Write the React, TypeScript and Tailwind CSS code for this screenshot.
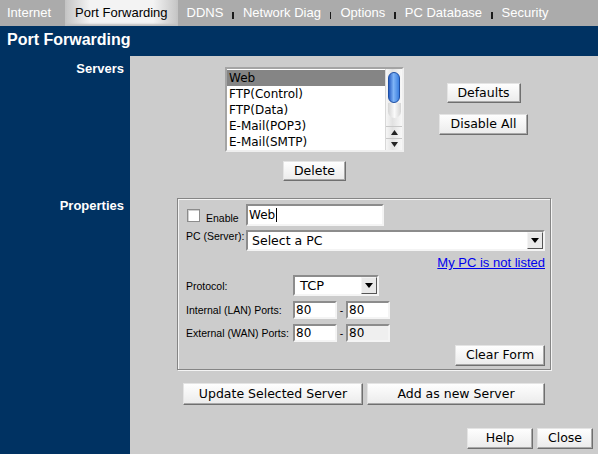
import React from "react";

const navItems = ["Network Diag", "Options", "PC Database", "Security"];
const servers = ["Web", "FTP(Control)", "FTP(Data)", "E-Mail(POP3)", "E-Mail(SMTP)"];

const lucida = "font-['DejaVu_Sans',sans-serif]";
const btn =
  "flex items-center justify-center border border-t-[#e4e4e4] border-l-[#e4e4e4] border-r-[#6f6f6f] border-b-[#6f6f6f] shadow-[inset_-1px_-1px_0_#a9a9a9] bg-[linear-gradient(#fefefe,#ebebeb)] text-[12.5px] leading-none text-black font-['DejaVu_Sans',sans-serif]";
const field =
  "border-2 border-t-[#8c8c8c] border-l-[#8c8c8c] border-r-[#f4f4f4] border-b-[#f4f4f4] bg-white";

function Arrow() {
  return (
    <span className="flex h-[17px] w-[16px] items-center justify-center border border-t-[#f4f4f4] border-l-[#f4f4f4] border-r-[#555] border-b-[#555] bg-[#e9e9e9]">
      <svg width="8" height="5" viewBox="0 0 8 5">
        <path d="M0 0h8L4 5z" fill="#000" />
      </svg>
    </span>
  );
}

function ScrollBar() {
  return (
    <div className="flex w-[17px] flex-col border-l border-[#d8d8d8] bg-[linear-gradient(to_right,#f6f6f6,#e2e2e2_40%,#f8f8f8)]">
      <div className="mx-auto mt-[3px] h-[31px] w-[12px] rounded-full border border-[#1d4fa5] bg-[linear-gradient(to_right,#2a5fc4,#7fb4f6_45%,#3b7fe0)]" />
      <div className="mx-auto h-[15px] w-[13px] rounded-b-full bg-[linear-gradient(to_right,#d4d4d4,#fafafa_50%,#d4d4d4)]" />
      <div className="flex-1" />
      <div className="flex h-[12px] items-center justify-center border-t border-[#c8c8c8]">
        <svg width="7" height="5" viewBox="0 0 7 5">
          <path d="M3.5 0L7 5H0z" fill="#222" />
        </svg>
      </div>
      <div className="flex h-[12px] items-center justify-center border-t border-[#c8c8c8]">
        <svg width="7" height="5" viewBox="0 0 7 5">
          <path d="M0 0h7L3.5 5z" fill="#222" />
        </svg>
      </div>
    </div>
  );
}

export default function App() {
  return (
    <div className="flex h-[454px] w-[598px] flex-col overflow-hidden bg-[#cccccc] font-['Liberation_Sans',Arial,sans-serif]">
      <nav className="flex h-[26px] items-stretch bg-[#ababab] text-[13px] text-white">
        <span className="flex items-center pl-[7px] pr-[14px]">Internet</span>
        <span className="flex items-center bg-[linear-gradient(to_right,#c4c4c4,#f3f3f3_22%,#f3f3f3_78%,#c4c4c4)] px-[10px] text-black shadow-[inset_0_-2px_2px_#c0c0c0]">
          Port Forwarding
        </span>
        <span className="flex items-center pl-[9px]">DDNS</span>
        {navItems.map((item) => (
          <React.Fragment key={item}>
            <span className="mx-[9px] mt-[12px] h-[7px] w-[1.5px] bg-[#1a1a1a]" />
            <span className="flex items-center">{item}</span>
          </React.Fragment>
        ))}
      </nav>

      <header className="h-[30px] bg-[#003262] pl-[7px] pt-[4px] text-[16px] font-bold leading-[19px] text-white">
        Port Forwarding
      </header>

      <div className="grid flex-1 grid-cols-[130px_1fr] grid-rows-[134px_1fr]">
        <div className="bg-[#003262] pr-[6px] pt-[5px] text-right text-[13px] font-bold leading-[15px] text-white">
          Servers
        </div>
        <div className="flex pl-[95px] pt-[11px]">
          <div className="flex flex-col items-center">
            <div className="flex h-[85px] w-[179px] border-2 border-t-[#a4a4a4] border-l-[#a4a4a4] border-r-[#efefef] border-b-[#efefef] bg-white">
              <ul className={`flex-1 pt-[1px] text-[12px] leading-[16px] text-black ${lucida}`}>
                {servers.map((s, i) => (
                  <li key={s} className={`h-[16px] pl-[2px] ${i === 0 ? "bg-[#858585]" : ""}`}>
                    {s}
                  </li>
                ))}
              </ul>
              <ScrollBar />
            </div>
            <button className={`${btn} mt-[9px] h-[20px] w-[63px]`}>Delete</button>
          </div>
          <div className="ml-[35px] flex w-[89px] flex-col items-center gap-[11px] pt-[16px]">
            <button className={`${btn} h-[20px] w-[74px]`}>Defaults</button>
            <button className={`${btn} h-[21px] w-[89px]`}>Disable All</button>
          </div>
        </div>

        <div className="bg-[#003262] pr-[6px] pt-[8px] text-right text-[13px] font-bold leading-[15px] text-white">
          Properties
        </div>
        <div className="flex flex-col pt-[8px]">
          <div className="ml-[47px] flex h-[172px] w-[374px] flex-col border border-[#858585] pb-[3px] pl-[8px] pr-[5px] pt-[5px] text-[10.5px] leading-[12px] text-black shadow-[inset_1px_1px_0_#f4f4f4,1px_1px_0_#f4f4f4]">
            <div className="flex items-center">
              <div className="flex w-[60px] items-center">
                <span className="ml-[1px] h-[13px] w-[13px] border border-[#8c8c8c] bg-white shadow-[inset_1px_1px_0_#d0d0d0]" />
                <span className="ml-[6px] mt-[5px]">Enable</span>
              </div>
              <div className={`${field} flex h-[22px] w-[138px] items-center pl-[1px] text-[12px] ${lucida}`}>
                Web<span className="ml-[1px] h-[14px] w-px bg-black" />
              </div>
            </div>

            <div className="mt-[4px] flex items-start">
              <span className="w-[60px]">PC (Server):</span>
              <div className={`${field} flex h-[21px] flex-1 items-center justify-between pl-[4px] text-[12.5px] ${lucida}`}>
                <span>Select a PC</span>
                <Arrow />
              </div>
            </div>

            <a className="mt-[4px] self-end text-[13px] leading-[15px] text-[#0000ee] underline">My PC is not listed</a>

            <div className="mt-[5px] flex items-center">
              <span className="w-[107px]">Protocol:</span>
              <div className={`${field} flex h-[21px] w-[86px] items-center justify-between pl-[5px] text-[13px] ${lucida}`}>
                <span>TCP</span>
                <Arrow />
              </div>
            </div>

            <div className="mt-[5px] flex items-center">
              <span className="w-[107px]">Internal (LAN) Ports:</span>
              <div className={`${field} flex h-[18px] w-[44px] items-center pl-[1px] text-[12px] ${lucida}`}>80</div>
              <span className="w-[9px] text-center">-</span>
              <div className={`${field} flex h-[18px] w-[44px] items-center pl-[1px] text-[12px] ${lucida}`}>80</div>
            </div>

            <div className="mt-[5px] flex items-center">
              <span className="w-[107px]">External (WAN) Ports:</span>
              <div className={`${field} flex h-[18px] w-[44px] items-center pl-[1px] text-[12px] ${lucida}`}>80</div>
              <span className="w-[9px] text-center">-</span>
              <div className={`${field} flex h-[18px] w-[44px] items-center !bg-[#efefef] pl-[1px] text-[12px] ${lucida}`}>80</div>
            </div>

            <button className={`${btn} mt-auto h-[21px] w-[90px] self-end`}>Clear Form</button>
          </div>

          <div className="ml-[53px] mt-[13px] flex gap-[4px]">
            <button className={`${btn} h-[22px] w-[180px]`}>Update Selected Server</button>
            <button className={`${btn} h-[22px] w-[178px]`}>Add as new Server</button>
          </div>

          <div className="mt-[23px] flex justify-end gap-[4px] pr-[5px]">
            <button className={`${btn} h-[21px] w-[66px]`}>Help</button>
            <button className={`${btn} h-[21px] w-[56px]`}>Close</button>
          </div>
        </div>
      </div>
    </div>
  );
}
